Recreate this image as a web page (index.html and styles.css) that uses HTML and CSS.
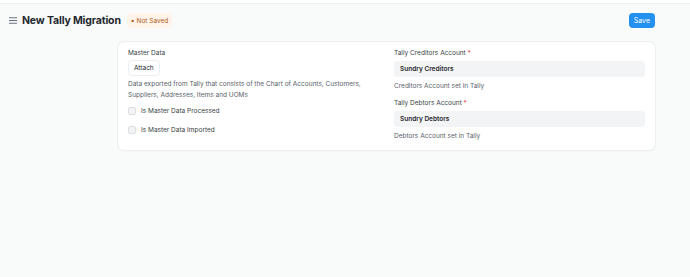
FILE: index.html
```html
<!DOCTYPE html>
<html>
<head>
<meta charset="utf-8">
<link rel="stylesheet" href="styles.css">
</head>
<body>
<div class="topbar"></div>
<div class="page-head">
  <div class="title-wrap">
    <svg class="hamburger" width="8" height="7" viewBox="0 0 8 7"><path d="M0 0.75H8M0 3.5H8M0 6.25H8" stroke="#6b7280" stroke-width="1"/></svg>
    <h1 class="title">New Tally Migration</h1>
    <span class="pill"><span class="dot">•</span> Not Saved</span>
  </div>
  <button class="btn-save">Save</button>
</div>
<div class="card">
  <div class="col">
    <div class="label">Master Data</div>
    <button class="btn-attach">Attach</button>
    <div class="desc">Data exported from Tally that consists of the Chart of Accounts, Customers, Suppliers, Addresses, Items and UOMs</div>
    <label class="check"><span class="box"></span>Is Master Data Processed</label>
    <label class="check"><span class="box"></span>Is Master Data Imported</label>
  </div>
  <div class="col">
    <div class="label">Tally Creditors Account <span class="req">*</span></div>
    <div class="input">Sundry Creditors</div>
    <div class="desc">Creditors Account set in Tally</div>
    <div class="label second">Tally Debtors Account <span class="req">*</span></div>
    <div class="input">Sundry Debtors</div>
    <div class="desc">Debtors Account set in Tally</div>
  </div>
</div>
</body>
</html>
```
FILE: styles.css
```css
html, body {
  margin: 0;
  padding: 0;
}
body {
  background: #f9fafa;
  font-family: Inter, "Noto Sans", sans-serif;
  color: #1f272e;
  width: 690px;
  height: 277px;
  overflow: hidden;
}
.topbar {
  height: 3px;
  background: #ffffff;
  border-bottom: 1px solid #ebeef0;
}
.page-head {
  display: flex;
  align-items: center;
  justify-content: space-between;
  padding: 5px 35px 0 9px;
  height: 22px;
}
.title-wrap {
  display: flex;
  align-items: center;
}
.hamburger {
  margin-right: 5px;
}
.title {
  margin: 0;
  font-size: 10.5px;
  font-weight: 700;
  color: #1f272e;
  letter-spacing: -0.15px;
}
.pill {
  margin-left: 6px;
  background: #fff3ea;
  color: #b05a19;
  font-size: 6.5px;
  padding: 3px 4px;
  border-radius: 5px;
}
.dot {
  font-size: 7px;
}
.btn-save {
  background: #2490ef;
  color: #fff;
  border: none;
  border-radius: 4px;
  font-family: Inter, sans-serif;
  font-size: 7px;
  padding: 0 5px;
  height: 15px;
}
.card {
  margin: 11px 35px 0 118px;
  background: #fff;
  border-radius: 6px;
  box-shadow: 0 0 0 1px #eceef0, 0 1px 2px rgba(0,0,0,0.06);
  display: grid;
  grid-template-columns: 1fr 1fr;
  column-gap: 15px;
  padding: 7px 10px 8px;
}
.col {
  display: flex;
  flex-direction: column;
  align-items: flex-start;
}
.col:last-child {
  align-items: stretch;
}
.label {
  font-size: 6.5px;
  color: #383f45;
  line-height: 9px;
}
.label.second {
  margin-top: 7px;
}
.req {
  color: #e24c4c;
}
.btn-attach {
  margin-top: 2px;
  background: #fff;
  border: 1px solid #ebeef0;
  border-radius: 4px;
  font-family: Inter, sans-serif;
  font-size: 6.5px;
  color: #1f272e;
  height: 16px;
  padding: 0 5px;
}
.desc {
  font-size: 6.5px;
  color: #59626a;
  line-height: 11px;
  margin-top: 3px;
}
.col:last-child .desc {
  margin-top: 4px;
}
.input {
  margin-top: 3px;
  background: #f3f4f5;
  border-radius: 4px;
  height: 16px;
  display: flex;
  align-items: center;
  padding: 0 6px;
  font-size: 6.5px;
  font-weight: 600;
  color: #1f272e;
}
.check {
  display: flex;
  align-items: center;
  font-size: 6.5px;
  color: #383f45;
  margin-top: 3px;
  height: 13px;
}
.check + .check {
  margin-top: 6px;
}
.box {
  width: 6px;
  height: 6px;
  border: 1px solid #dcdfe3;
  background: #f3f3f3;
  border-radius: 2px;
  margin-right: 5px;
}
```
